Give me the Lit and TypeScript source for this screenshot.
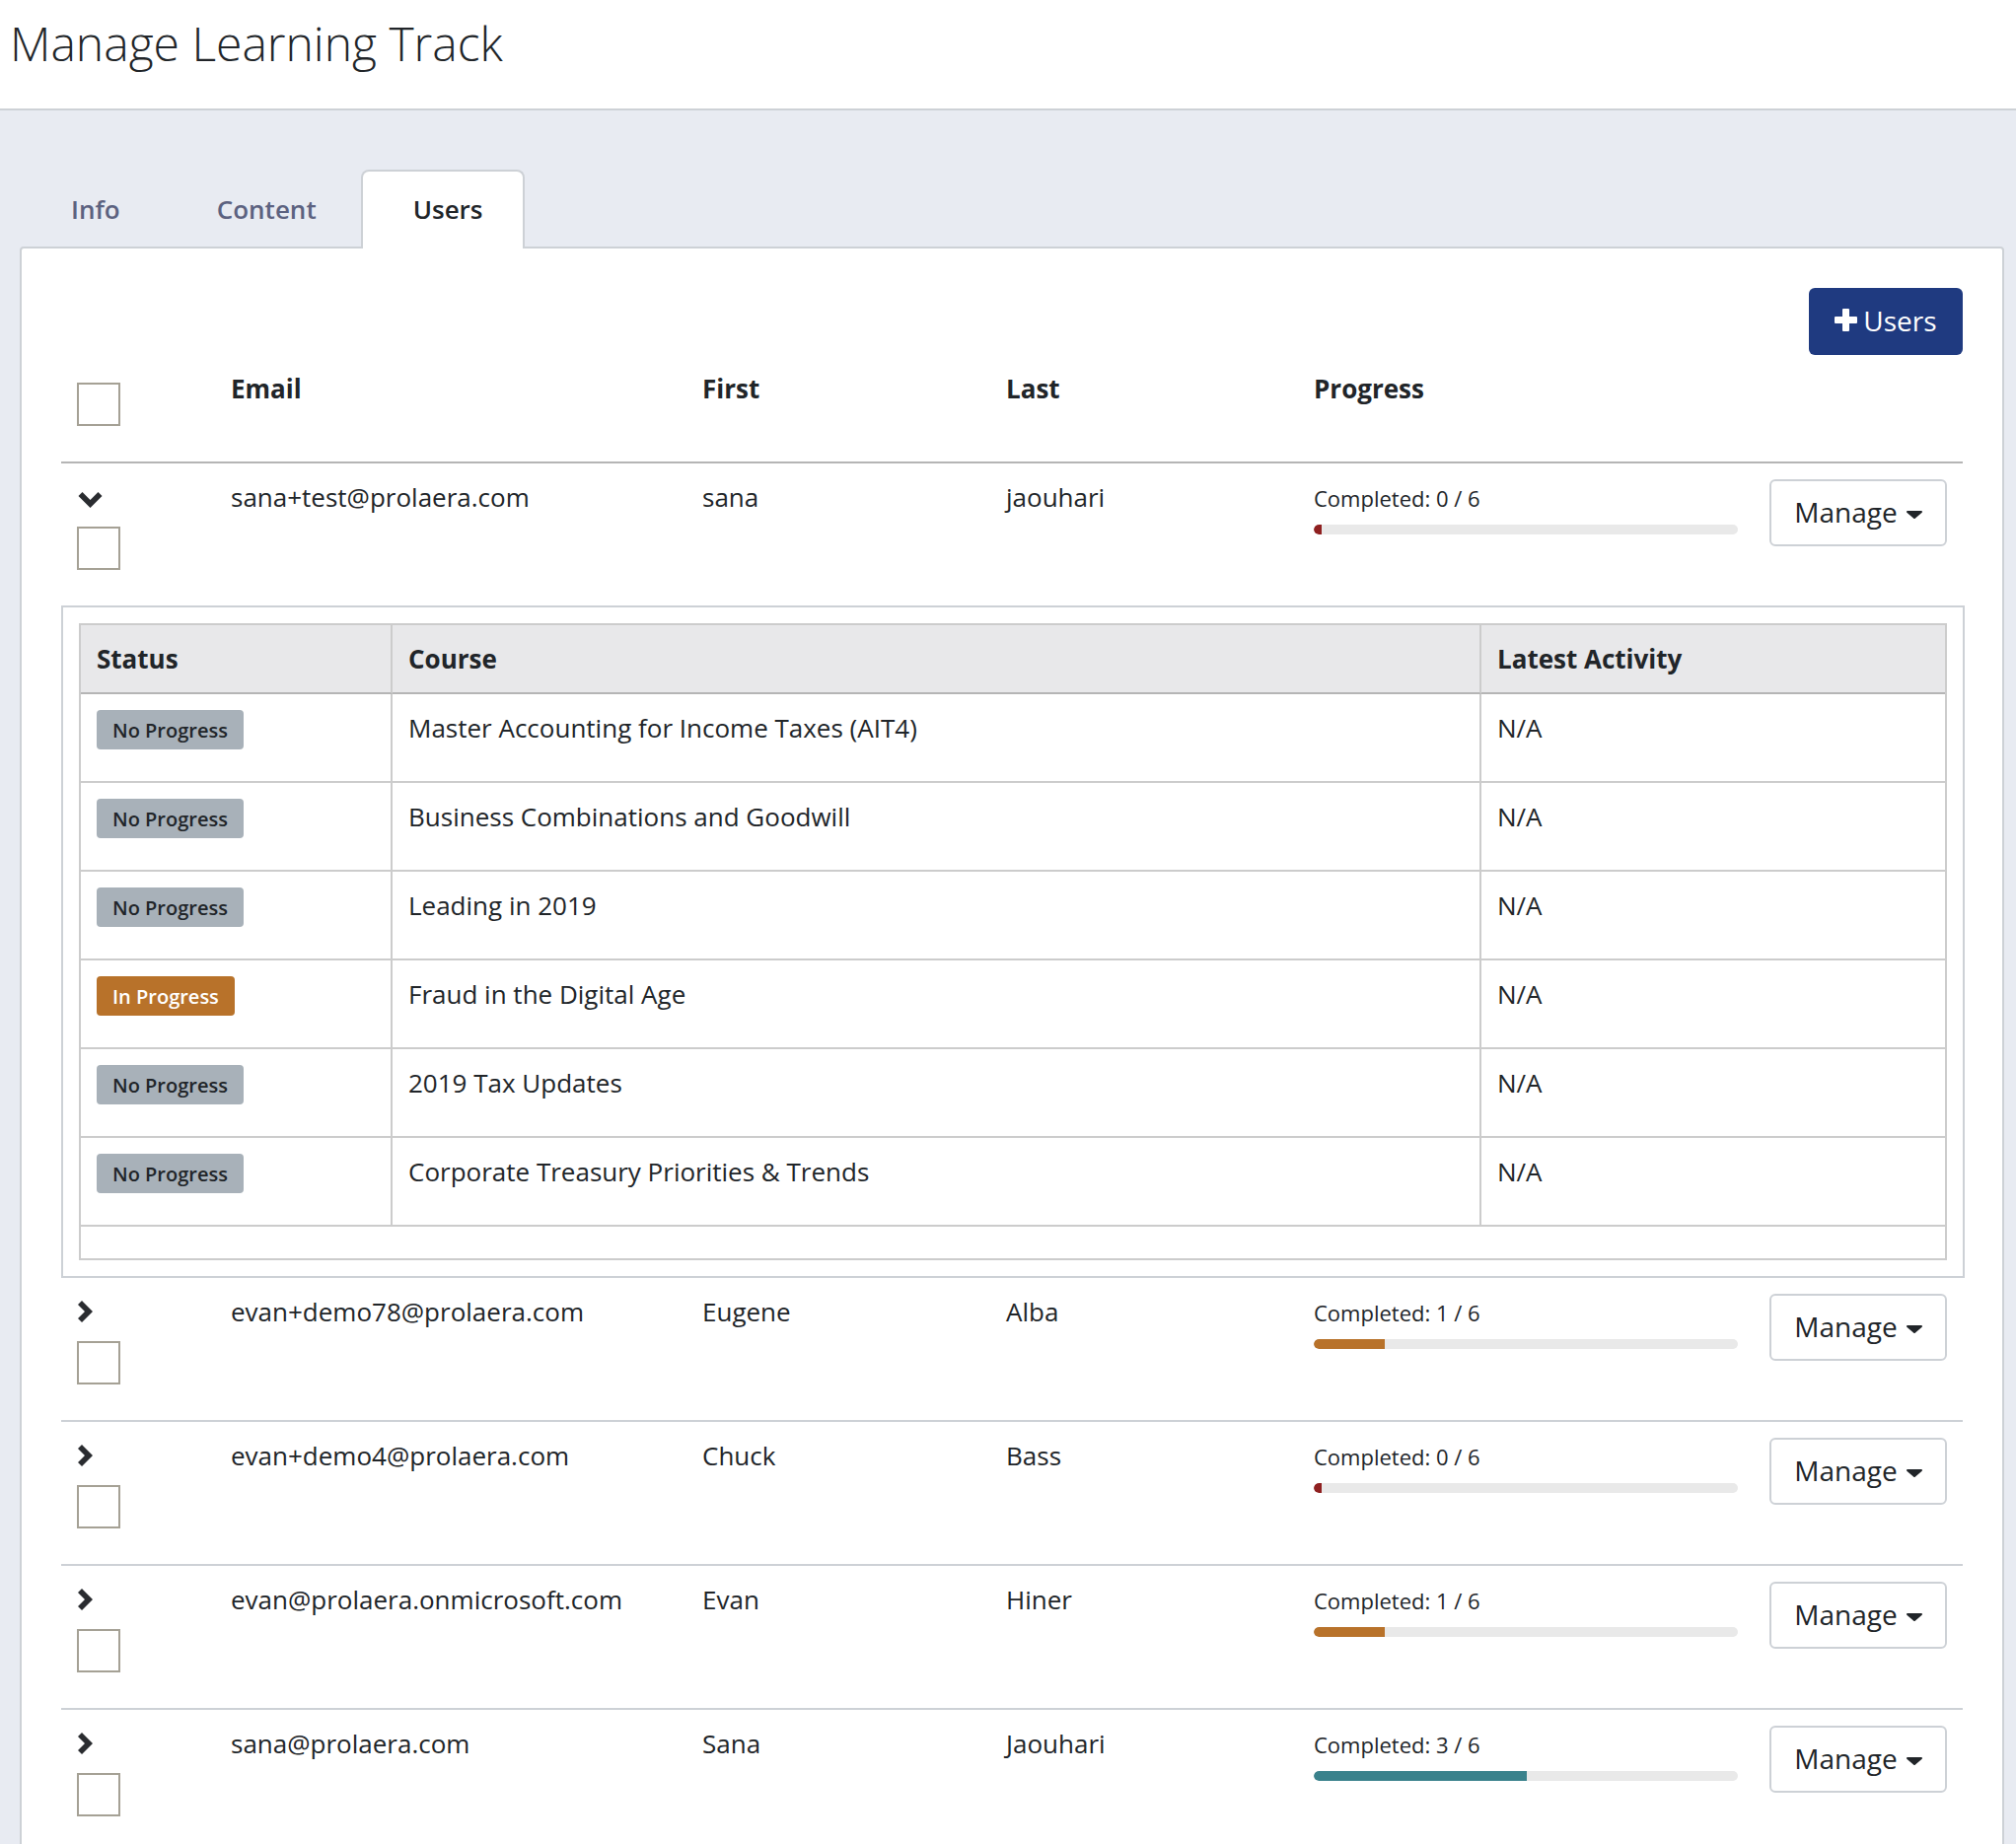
import { LitElement, html, css, nothing } from "lit";
import { customElement } from "lit/decorators.js";

const PLUS = "M8 1a1 1 0 0 1 1-1h5a1 1 0 0 1 1 1v7h7a1 1 0 0 1 1 1v5a1 1 0 0 1-1 1h-7v7a1 1 0 0 1-1 1H9a1 1 0 0 1-1-1v-7H1a1 1 0 0 1-1-1V9a1 1 0 0 1 1-1h7z";

interface User { email: string; first: string; last: string; done: number; open?: boolean; }
const USERS: User[] = [
  { email: "sana+test@prolaera.com", first: "sana", last: "jaouhari", done: 0, open: true },
  { email: "evan+demo78@prolaera.com", first: "Eugene", last: "Alba", done: 1 },
  { email: "evan+demo4@prolaera.com", first: "Chuck", last: "Bass", done: 0 },
  { email: "evan@prolaera.onmicrosoft.com", first: "Evan", last: "Hiner", done: 1 },
  { email: "sana@prolaera.com", first: "Sana", last: "Jaouhari", done: 3 },
];
const COURSES: [boolean, string][] = [
  [false, "Master Accounting for Income Taxes (AIT4)"],
  [false, "Business Combinations and Goodwill"],
  [false, "Leading in 2019"],
  [true, "Fraud in the Digital Age"],
  [false, "2019 Tax Updates"],
  [false, "Corporate Treasury Priorities & Trends"],
];

@customElement("app-root")
export class AppRoot extends LitElement {
  static styles = css`
    :host {
      display: block;
      height: 1870px;
      overflow: hidden;
      background: #e8ebf2;
      font-family: "Open Sans", sans-serif;
      font-size: 26px;
      line-height: 39px;
      color: #212529;
    }
    * { box-sizing: border-box; }
    .top {
      height: 112px;
      background: #fff;
      border-bottom: 2px solid #cdd1d6;
      padding-left: 10px;
    }
    h1 {
      margin: 0;
      font-size: 48px;
      font-weight: 300;
      line-height: 88px;
    }
    .tabs {
      display: flex;
      align-items: flex-end;
      gap: 4px;
      padding: 60px 0 0 20px;
      margin-bottom: -2px;
      position: relative;
      z-index: 1;
    }
    .tab {
      height: 80px;
      padding: 19px 40px 0 50px;
      border: 2px solid transparent;
      border-bottom: 0;
      border-radius: 8px 8px 0 0;
      font-weight: 600;
      color: #5c6280;
    }
    .tab.active {
      margin-left: -1px;
      padding-left: 51px;
      background: #fff;
      border-color: #cdd1d6;
      color: #212529;
    }
    .panel {
      margin: 0 12px 0 20px;
      height: 1700px;
      background: #fff;
      border: 2px solid #cdd1d6;
      border-radius: 4px 4px 0 0;
      padding: 40px 40px 0;
    }
    .actions {
      display: flex;
      justify-content: flex-end;
    }
    .add {
      display: flex;
      align-items: center;
      justify-content: center;
      gap: 6px;
      width: 156px;
      height: 68px;
      border: 0;
      border-radius: 6px;
      background: #1f3a80;
      color: #fff;
      font: 400 28px "Open Sans", sans-serif;
      padding: 0 0 2px;
    }
    .add svg { width: 23px; height: 23px; margin-bottom: 2px; fill: #fff; }
    table { border-spacing: 0; border-collapse: separate; table-layout: fixed; }
    .users { width: 1928px; }
    .users col.c1 { width: 156px; }
    .users col.c2 { width: 478px; }
    .users col.c3 { width: 308px; }
    .users col.c4 { width: 312px; }
    .users col.c5 { width: 462px; }
    .users col.c6 { width: 212px; }
    .users > * > tr > th, .users > * > tr > .cell {
      text-align: left;
      vertical-align: top;
      padding: 16px;
    }
    .users > * > tr > th { padding-top: 15px; }
    .users > tbody > tr > .cell.text { padding-top: 15px; }
    .users > thead > tr > th {
      height: 110px;
      border-bottom: 2px solid #b5b5b5;
      font-weight: 700;
    }
    .users > tbody > tr.sep > .cell { border-top: 2px solid #cdd1d6; height: 146px; }
    .users > tbody > tr.plain > .cell { height: 144px; }
    .check {
      display: block;
      appearance: none;
      width: 44px;
      height: 44px;
      margin: 0;
      border: 2px solid #a5a195;
      background: #fff;
    }
    .head-check { margin-top: 13px; }
    .toggle { display: block; height: 48px; }
    .toggle.closed { padding: 6px 0 0 1px; }
    .toggle.opened { padding: 13px 0 0 1px; }
    .toggle svg { display: block; fill: #2a2c30; }
    .toggle svg.r { width: 15px; height: 24px; }
    .toggle svg.d { width: 25px; height: 16px; }
    .progress-label { font-size: 22px; line-height: 33px; padding-top: 3px; }
    .track {
      height: 10px;
      margin-top: 10px;
      background: #e9e9e9;
      border-radius: 5px;
      overflow: hidden;
    }
    .fill { height: 100%; border-radius: 5px 0 0 5px; }
    .f0 { background: #8f2020; }
    .f1 { background: #b8722a; }
    .f3 { background: #3a828c; }
    .menu {
      display: flex;
      align-items: center;
      justify-content: center;
      gap: 9px;
      width: 180px;
      height: 68px;
      border: 2px solid #cdd1d6;
      border-radius: 6px;
      background: #fff;
      color: #212529;
      font: 400 28px "Open Sans", sans-serif;
      padding: 0 0 2px;
    }
    .caret { width: 16px; height: 8px; margin-top: 6px; fill: #212529; }
    .detail-cell { padding: 0; }
    .detail {
      width: 1930px;
      height: 682px;
      border: 2px solid #cdd1d6;
      padding: 16px;
    }
    .courses { width: 1894px; border: 2px solid #ccc; }
    .courses col.a { width: 316px; }
    .courses col.b { width: 1104px; }
    .courses th, .courses td {
      text-align: left;
      vertical-align: top;
      padding: 16px;
    }
    .courses td.text { padding-top: 15px; }
    .courses td { height: 90px; border-bottom: 2px solid #ccc; }
    .courses td.mid, .courses th.mid { border-right: 2px solid #ccc; }
    .courses th {
      height: 70px;
      padding: 15px 16px 14px;
      background: #e8e8ea;
      border-bottom: 2px solid #b5b5b5;
      font-weight: 700;
    }
    .courses td.empty { height: 32px; padding: 0; border-bottom: 0; }
    .badge {
      display: inline-block;
      height: 40px;
      padding: 0 16px;
      border-radius: 4px;
      background: #a8b1b9;
      font-size: 20px;
      font-weight: 600;
      line-height: 41px;
      vertical-align: top;
    }
    .badge.on { background: #b8722a; color: #fff; }
  `;

  private row(u: User, i: number) {
    return html`
      <tr class=${i === 0 || USERS[i - 1].open ? "plain" : "sep"}>
        <td class="cell">
          <span class="toggle ${u.open ? "opened" : "closed"}">
            ${u.open
              ? html`<svg class="d" viewBox="0 0 25 16"><polygon points="12.5,16 24.5,4 20.5,0 12.5,8 4.5,0 0.5,4"></polygon></svg>`
              : html`<svg class="r" viewBox="0 0 15 24"><polygon points="15,12 4,1 0,5 7,12 0,19 4,23"></polygon></svg>`}
          </span>
          <input class="check" type="checkbox" />
        </td>
        <td class="cell text">${u.email}</td>
        <td class="cell text">${u.first}</td>
        <td class="cell text">${u.last}</td>
        <td class="cell">
          <div class="progress-label">Completed: ${u.done} / 6</div>
          <div class="track">
            <div class="fill f${u.done}" style="width:${u.done ? u.done * 72 : 8}px"></div>
          </div>
        </td>
        <td class="cell">
          <button class="menu">Manage<svg class="caret" viewBox="0 0 16 8"><path d="M1 0h14a1 1 0 0 1 .7 1.7L8.7 7.7a1 1 0 0 1-1.4 0L.3 1.7A1 1 0 0 1 1 0z"></path></svg></button>
        </td>
      </tr>
      ${u.open
        ? html`<tr>
            <td class="detail-cell" colspan="6">
              <div class="detail">
                <table class="courses">
                  <colgroup><col class="a" /><col class="b" /><col /></colgroup>
                  <thead>
                    <tr><th class="mid">Status</th><th class="mid">Course</th><th>Latest Activity</th></tr>
                  </thead>
                  <tbody>
                    ${COURSES.map(
                      ([on, name]) => html`<tr>
                        <td class="mid"><span class="badge ${on ? "on" : ""}">${on ? "In Progress" : "No Progress"}</span></td>
                        <td class="mid text">${name}</td>
                        <td class="text">N/A</td>
                      </tr>`
                    )}
                    <tr><td class="empty" colspan="3"></td></tr>
                  </tbody>
                </table>
              </div>
            </td>
          </tr>`
        : nothing}
    `;
  }

  render() {
    return html`
      <header class="top"><h1>Manage Learning Track</h1></header>
      <nav class="tabs">
        <div class="tab">Info</div>
        <div class="tab">Content</div>
        <div class="tab active">Users</div>
      </nav>
      <section class="panel">
        <div class="actions">
          <button class="add"><svg viewBox="0 0 23 23"><path d=${PLUS}></path></svg>Users</button>
        </div>
        <table class="users">
          <colgroup>
            <col class="c1" /><col class="c2" /><col class="c3" /><col class="c4" /><col class="c5" /><col class="c6" />
          </colgroup>
          <thead>
            <tr>
              <th><input class="check head-check" type="checkbox" /></th>
              <th>Email</th><th>First</th><th>Last</th><th>Progress</th><th></th>
            </tr>
          </thead>
          <tbody>${USERS.map((u, i) => this.row(u, i))}</tbody>
        </table>
      </section>
    `;
  }
}
